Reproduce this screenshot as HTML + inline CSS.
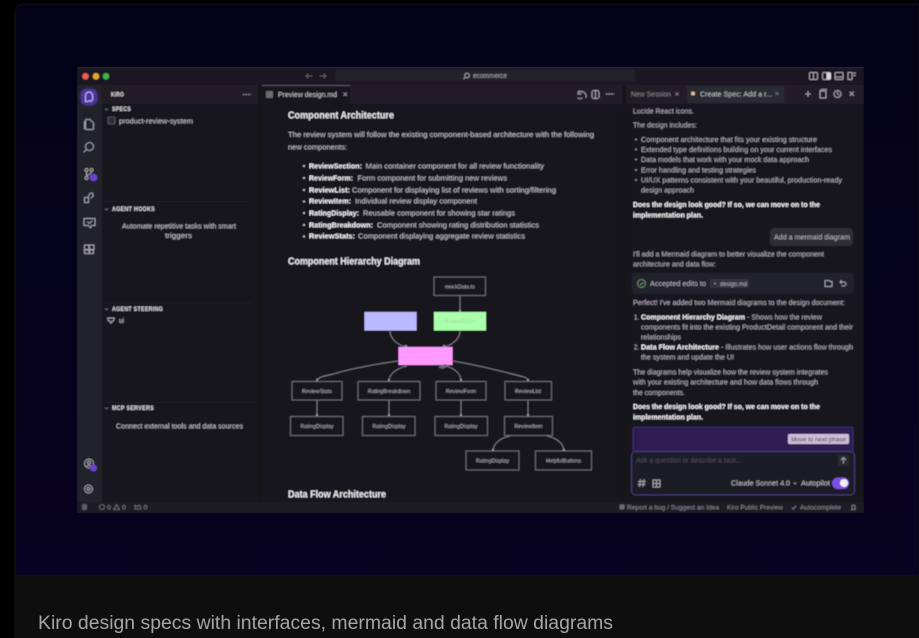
<!DOCTYPE html>
<html lang="en"><head><meta charset="utf-8"><title>Kiro design specs</title>
<style>
html,body{margin:0;padding:0;background:#000;width:919px;height:638px;overflow:hidden}
svg{display:block;font-family:"Liberation Sans",sans-serif}
text{white-space:pre}
.m{fill:#c6c4ca;font-size:7.5px}
.c{fill:#b6b4bb;font-size:7.2px}
.b{fill:#fbfafc;font-size:7.5px;font-weight:700}
.h{fill:#f0eff2;font-size:10px;font-weight:700}
.s{fill:#e0dfe4;font-size:6.2px;font-weight:700;letter-spacing:.3px}
.d{fill:#b5b4b9;font-size:5.4px;text-anchor:middle}
.st{fill:#8b8991;font-size:6.5px}
.i{fill:none;stroke:#a3a1a9;stroke-width:1;stroke-linecap:round;stroke-linejoin:round}
.ds{fill:#19181d;stroke:#7f7e83;stroke-width:.8}
.e{fill:none;stroke:#8f8e93;stroke-width:.8}
</style></head><body>
<svg width="919" height="638" viewBox="0 0 919 638" xmlns="http://www.w3.org/2000/svg">
<defs>
<linearGradient id="bg" x1="0" y1="0" x2="0" y2="1"><stop offset="0" stop-color="#040218"/><stop offset=".6" stop-color="#06021d"/><stop offset="1" stop-color="#0a0324"/></linearGradient>
<radialGradient id="glow"><stop offset=".55" stop-color="#5a3fc0" stop-opacity=".55"/><stop offset="1" stop-color="#5a3fc0" stop-opacity="0"/></radialGradient>
<filter id="bl" x="0" y="0" width="100%" height="100%"><feGaussianBlur stdDeviation=".42"/></filter>
</defs>
<rect width="919" height="638" fill="#000"/>
<path d="M15 638V13a9 9 0 0 1 9-9H919V638Z" fill="url(#bg)" stroke="#131318"/>
<rect x="15.500" y="575" width="904" height="63" fill="#0e0e0e"/>
<text x="38" y="629" textLength="575" lengthAdjust="spacingAndGlyphs" fill="#a6a6a6" font-size="19">Kiro design specs with interfaces, mermaid and data flow diagrams</text>

<g filter="url(#bl)">
<!-- window -->
<rect x="77" y="67" width="787" height="446" rx="3" fill="#131217"/>
<rect x="77" y="67" width="787" height="18" fill="#1a1920"/>
<rect x="77" y="67" width="787" height=".8" fill="#3a3940"/>
<circle cx="85.500" cy="76.300" r="3.300" fill="#e5604f"/><circle cx="96" cy="76.300" r="3.300" fill="#e0a92e"/><circle cx="106" cy="76.300" r="3.300" fill="#3fb24a"/>
<path class="i" d="M306 76h6M306 76l2-2M306 76l2 2M320 76h6M326 76l-2-2M326 76l-2 2" style="stroke:#5f5d66"/>
<rect x="335" y="70" width="300" height="11" rx="2" fill="#232129"/>
<circle class="i" cx="467" cy="75.500" r="2.300"/><path class="i" d="M465.400 77.200l-1.600 1.600"/>
<text x="473" y="78.200" textLength="34" lengthAdjust="spacingAndGlyphs" fill="#a9a7ae" font-size="7">ecommerce</text>
<g class="i">
<rect x="809.500" y="72.500" width="8" height="7" rx="1"/><path d="M813.500 72.500v7"/>
<rect x="822.500" y="72.500" width="8" height="7" rx="1.500"/>
<rect x="835" y="72.500" width="8" height="7" rx="1"/><path d="M835 77h8"/>
<rect x="848" y="72.500" width="4" height="7"/><path d="M853.500 73l2 0M853.500 75.500l2 0"/>
</g>
<path d="M826.500 72.500h3a1.500 1.500 0 0 1 1.500 1.500v4a1.500 1.500 0 0 1-1.500 1.500h-3Z" fill="#d8d6dc"/>

<!-- activity bar -->
<rect x="77" y="85" width="25" height="428" fill="#24222a"/>
<circle cx="89" cy="97" r="11" fill="url(#glow)"/>
<rect x="81" y="89" width="16" height="16" rx="5" fill="#4b369c"/>
<path d="M85.500 101.500v-6a3.500 3.500 0 0 1 7 0v4.500l-1.500 1.500-1.500-1-1.500 1-1 0Z" fill="none" stroke="#c9bdf2" stroke-width="1"/>
<g class="i">
<path d="M86 119.500h4l3.500 3.500v5.500a1 1 0 0 1-1 1H86.500a1 1 0 0 1-1-1v-8a1 1 0 0 1 .5-1Z"/><path d="M85.500 121.500h-1v7.500"/>
<circle cx="89.500" cy="146.500" r="4"/><path d="M86.500 149.500l-2.500 2.500"/>
<circle cx="86.500" cy="170" r="1.500"/><circle cx="86.500" cy="178" r="1.500"/><circle cx="91.500" cy="170" r="1.500"/><path d="M86.500 171.500v5M91.500 171.500c0 3-5 3-5 5"/>
<path d="M84.500 197.500h4v5h-4ZM88.500 197c0-3 2-4 4-4l1 2.500-2.500 2.500"/><path d="M85 202.500h3"/>
<path d="M84 218.500h11v7h-3.500l-1 2.500-2-2.500H84Z"/><path d="M87.500 222l2 1.500 2.500-2.500"/>
<path d="M84.500 245h4.500v4.500h-4.500ZM89.500 245h4.500v4.500h-4.500ZM84.500 250h4.500v3.500h-4.500ZM89.500 250h4v3.500h-4Z"/>
<circle cx="89" cy="463.500" r="4.500"/><circle cx="89" cy="462.500" r="1.500"/><path d="M86.500 466.500c1-1.500 4-1.500 5 0"/>
<circle cx="88.500" cy="489" r="1.500"/><circle cx="88.500" cy="489" r="4"/>
</g>
<circle cx="93.500" cy="177.500" r="3.800" fill="#6a43cf"/>
<circle cx="93.500" cy="468" r="3.500" fill="#6a43cf"/>

<!-- sidebar -->
<rect x="102" y="85" width="156" height="417" fill="#18171c"/>
<rect x="102" y="85" width="156" height="19" fill="#211f27"/>
<text class="s" x="111" y="96.500" textLength="13" lengthAdjust="spacingAndGlyphs">KIRO</text>
<path d="M243 94.500h8" stroke="#8f8d95" stroke-width="1.200" stroke-dasharray="1.500 1"/>
<g fill="none" stroke="#77757d" stroke-width=".8">
<path d="M105 108.500l1.500 1.500 1.500-1.500M105 208.500l1.500 1.500 1.500-1.500M105 308.500l1.500 1.500 1.500-1.500M105 407.500l1.500 1.500 1.500-1.500"/>
</g>
<path d="M104 201.500h148M104 303h148M104 402.500h152" stroke="#1f1e24" stroke-width="1"/>
<text class="s" x="112" y="111" textLength="19" lengthAdjust="spacingAndGlyphs">SPECS</text>
<rect x="108" y="117" width="7" height="7" rx="1" fill="#2f2e35" stroke="#74727a" stroke-width=".6"/>
<text class="m" x="119" y="123.500" textLength="74" lengthAdjust="spacingAndGlyphs">product-review-system</text>
<text class="s" x="112" y="211" textLength="43" lengthAdjust="spacingAndGlyphs">AGENT HOOKS</text>
<text class="m" x="122" y="228.500" textLength="114" lengthAdjust="spacingAndGlyphs">Automate repetitive tasks with smart</text>
<text class="m" x="165" y="238" textLength="27" lengthAdjust="spacingAndGlyphs">triggers</text>
<text class="s" x="112" y="311" textLength="51" lengthAdjust="spacingAndGlyphs">AGENT STEERING</text>
<path class="i" d="M107.500 318h7l-1 3h-1.500l-.5 2h-1l-.5-2h-1.500Z"/>
<text class="m" x="119" y="323" textLength="5" lengthAdjust="spacingAndGlyphs">ui</text>
<text class="s" x="112" y="410" textLength="42" lengthAdjust="spacingAndGlyphs">MCP SERVERS</text>
<text class="m" x="116" y="428.500" textLength="127" lengthAdjust="spacingAndGlyphs">Connect external tools and data sources</text>

<!-- editor -->
<rect x="262" y="85" width="360" height="417" fill="#18171c"/>
<rect x="262" y="85" width="360" height="19" fill="#201f26"/>
<rect x="262" y="85" width="88" height="19" fill="#18171c"/>
<rect x="262" y="85" width="88" height="1" fill="#55535e"/>
<rect x="266" y="91" width="7" height="7" rx="1" fill="#6b6972"/>
<text class="m" x="278" y="97" textLength="59" lengthAdjust="spacingAndGlyphs" style="fill:#c8c6cc">Preview design.md</text>
<path d="M343.500 92.500l3.500 3.500M347 92.500l-3.500 3.500" stroke="#a4a2a9" stroke-width=".8"/>
<g class="i">
<path d="M578 92.500a5 5 0 0 1 8 5M578 98a3 3 0 0 0 4 0"/><path d="M579 91l-1 3 3 0"/>
<rect x="592" y="90.500" width="7" height="8" rx="2"/><path d="M595.500 90.500v8"/>
</g>
<path d="M606 94h8" stroke="#a4a2a9" stroke-width="1.200" stroke-dasharray="1.500 1"/>

<text class="h" x="288" y="118.500" textLength="106" lengthAdjust="spacingAndGlyphs">Component Architecture</text>
<text class="m" x="288" y="137" textLength="306" lengthAdjust="spacingAndGlyphs">The review system will follow the existing component-based architecture with the following</text>
<text class="m" x="288" y="149.500" textLength="59" lengthAdjust="spacingAndGlyphs">new components:</text>
<g fill="#d0cfd4">
<circle cx="304" cy="166" r="1"/><circle cx="304" cy="178" r="1"/><circle cx="304" cy="190" r="1"/><circle cx="304" cy="201.500" r="1"/><circle cx="304" cy="213" r="1"/><circle cx="304" cy="225" r="1"/><circle cx="304" cy="236.500" r="1"/>
</g>
<text class="b" x="309" y="168.500" textLength="53" lengthAdjust="spacingAndGlyphs">ReviewSection:</text><text class="m" x="365.500" y="168.500" textLength="178.500" lengthAdjust="spacingAndGlyphs">Main container component for all review functionality</text>
<text class="b" x="309" y="180.500" textLength="44" lengthAdjust="spacingAndGlyphs">ReviewForm:</text><text class="m" x="357.500" y="180.500" textLength="149.500" lengthAdjust="spacingAndGlyphs">Form component for submitting new reviews</text>
<text class="b" x="309" y="192.500" textLength="41" lengthAdjust="spacingAndGlyphs">ReviewList:</text><text class="m" x="352" y="192.500" textLength="204" lengthAdjust="spacingAndGlyphs">Component for displaying list of reviews with sorting/filtering</text>
<text class="b" x="309" y="203.500" textLength="42" lengthAdjust="spacingAndGlyphs">ReviewItem:</text><text class="m" x="355" y="203.500" textLength="122" lengthAdjust="spacingAndGlyphs">Individual review display component</text>
<text class="b" x="309" y="215.500" textLength="50" lengthAdjust="spacingAndGlyphs">RatingDisplay:</text><text class="m" x="363" y="215.500" textLength="152" lengthAdjust="spacingAndGlyphs">Reusable component for showing star ratings</text>
<text class="b" x="309" y="227.500" textLength="64" lengthAdjust="spacingAndGlyphs">RatingBreakdown:</text><text class="m" x="377" y="227.500" textLength="162" lengthAdjust="spacingAndGlyphs">Component showing rating distribution statistics</text>
<text class="b" x="309" y="238.500" textLength="46" lengthAdjust="spacingAndGlyphs">ReviewStats:</text><text class="m" x="358" y="238.500" textLength="167" lengthAdjust="spacingAndGlyphs">Component displaying aggregate review statistics</text>
<text class="h" x="288" y="264.500" textLength="132" lengthAdjust="spacingAndGlyphs">Component Hierarchy Diagram</text>

<!-- diagram -->
<g class="e">
<path d="M460 296v16"/>
<path d="M390 331c0 8 8 14 16 16"/>
<path d="M460 331c0 8-8 14-16 16"/>
<path d="M398 361c-30 4-55 10-61 12-5 2-20 3-20 8"/>
<path d="M407 366c-10 2-18 8-18 15"/>
<path d="M445 366c10 2 16 8 16 15"/>
<path d="M453 361c30 5 55 12 71 16 3 1 4 2 4 4"/>
<path d="M317 400v16M389 400v16M461 400v16M528 400v16"/>
<path d="M510 436c-10 2-17 8-17 15"/>
<path d="M547 436c10 2 17 8 17 15"/>
</g>
<g fill="#aaa9ae">
<circle cx="460" cy="311" r="1"/><circle cx="406" cy="346" r="1"/><circle cx="444" cy="346" r="1"/><circle cx="317" cy="380" r="1"/><circle cx="389" cy="380" r="1"/><circle cx="461" cy="380" r="1"/><circle cx="528" cy="380" r="1"/><circle cx="317" cy="415" r="1"/><circle cx="389" cy="415" r="1"/><circle cx="461" cy="415" r="1"/><circle cx="528" cy="415" r="1"/><circle cx="493" cy="450" r="1"/><circle cx="564" cy="450" r="1"/>
</g>
<rect class="ds" x="434" y="277" width="51.500" height="18.500"/><text class="d" x="459.800" y="288.500">mockData.ts</text>
<rect x="364.500" y="312" width="52" height="18.500" fill="#b9b9ff"/>
<rect x="434" y="312" width="52" height="18.500" fill="#aaffaa"/>
<text class="d" x="460" y="323" style="fill:#9ae29a">ProductDetail</text>
<rect x="398.500" y="347" width="54" height="18" fill="#ff99ff"/>
<path d="M438 367l7-3 4 2-7 3Z" fill="#6c6b70"/>
<rect class="ds" x="292" y="381.500" width="50" height="18.500"/><text class="d" x="317" y="392.800">ReviewStats</text>
<rect class="ds" x="358" y="381.500" width="62" height="18.500"/><text class="d" x="389" y="392.800">RatingBreakdown</text>
<rect class="ds" x="436" y="381.500" width="50" height="18.500"/><text class="d" x="461" y="392.800">ReviewForm</text>
<rect class="ds" x="505" y="381.500" width="46.500" height="18.500"/><text class="d" x="528" y="392.800">ReviewList</text>
<rect class="ds" x="290.500" y="416.500" width="52.500" height="19"/><text class="d" x="317" y="428">RatingDisplay</text>
<rect class="ds" x="362.500" y="416.500" width="52.500" height="19"/><text class="d" x="389" y="428">RatingDisplay</text>
<rect class="ds" x="435" y="416.500" width="52.500" height="19"/><text class="d" x="461" y="428">RatingDisplay</text>
<rect class="ds" x="504.500" y="416.500" width="48" height="19"/><text class="d" x="528.500" y="428">ReviewItem</text>
<rect class="ds" x="466" y="451" width="53" height="19"/><text class="d" x="492.500" y="462.500">RatingDisplay</text>
<rect class="ds" x="535.500" y="451" width="56" height="19"/><text class="d" x="563.500" y="462.500">HelpfulButtons</text>
<text class="h" x="288" y="497.500" textLength="98" lengthAdjust="spacingAndGlyphs">Data Flow Architecture</text>

<!-- chat -->
<rect x="626" y="85" width="238" height="417" fill="#18171c"/>
<rect x="626" y="85" width="238" height="19" fill="#201f26"/>
<text class="c" x="631" y="96.500" textLength="40" lengthAdjust="spacingAndGlyphs" style="fill:#85838b">New Session</text>
<path d="M675.500 92.500l3 3M678.500 92.500l-3 3" stroke="#8a8890" stroke-width=".8"/>
<rect x="687" y="86" width="97" height="17" rx="1" fill="#2b2932"/>
<circle cx="693" cy="93.500" r="2" fill="#e2b9a0"/>
<text class="c" x="700" y="96.500" textLength="72" lengthAdjust="spacingAndGlyphs" style="fill:#c0bec5">Create Spec: Add a r...</text>
<path d="M775.500 92l3 3M778.500 92l-3 3" stroke="#77757d" stroke-width=".8"/>
<g class="i">
<path d="M808 91.500v5M805.500 94h5"/>
<path d="M820 91h6v7h-6ZM820 91l1.500-1.500h5"/>
<circle cx="837.500" cy="94" r="3.500"/><path d="M837.500 92v2l1.500 1"/>
<path d="M850 92l3.500 3.500M853.500 92l-3.500 3.500"/>
</g>

<text class="c" x="633" y="113.500" textLength="61" lengthAdjust="spacingAndGlyphs">Lucide React icons.</text>
<text class="c" x="633" y="127.500" textLength="64" lengthAdjust="spacingAndGlyphs">The design includes:</text>
<g fill="#aaa8af">
<circle cx="636" cy="139.500" r=".9"/><circle cx="636" cy="149.500" r=".9"/><circle cx="636" cy="159.500" r=".9"/><circle cx="636" cy="170" r=".9"/><circle cx="636" cy="180" r=".9"/>
</g>
<text class="c" x="641" y="142" textLength="176" lengthAdjust="spacingAndGlyphs">Component architecture that fits your existing structure</text>
<text class="c" x="641" y="152" textLength="191" lengthAdjust="spacingAndGlyphs">Extended type definitions building on your current interfaces</text>
<text class="c" x="641" y="162" textLength="168" lengthAdjust="spacingAndGlyphs">Data models that work with your mock data approach</text>
<text class="c" x="641" y="172.500" textLength="115" lengthAdjust="spacingAndGlyphs">Error handling and testing strategies</text>
<text class="c" x="641" y="182.500" textLength="201" lengthAdjust="spacingAndGlyphs">UI/UX patterns consistent with your beautiful, production-ready</text>
<text class="c" x="641" y="192.500" textLength="53" lengthAdjust="spacingAndGlyphs">design approach</text>
<text class="b" x="633" y="207" textLength="187" lengthAdjust="spacingAndGlyphs" style="font-size:7.2px">Does the design look good? If so, we can move on to the</text>
<text class="b" x="633" y="217.500" textLength="70" lengthAdjust="spacingAndGlyphs" style="font-size:7.2px">implementation plan.</text>
<rect x="770" y="228" width="83" height="18" rx="4" fill="#2f2d35"/>
<text class="c" x="774" y="239.500" textLength="76" lengthAdjust="spacingAndGlyphs">Add a mermaid diagram</text>
<text class="c" x="633" y="256.500" textLength="191" lengthAdjust="spacingAndGlyphs">I'll add a Mermaid diagram to better visualize the component</text>
<text class="c" x="633" y="266.500" textLength="83" lengthAdjust="spacingAndGlyphs">architecture and data flow:</text>
<rect x="632" y="273" width="222" height="21" rx="3" fill="#24222a"/>
<circle cx="641.500" cy="283.500" r="4" fill="none" stroke="#7a9c85" stroke-width=".8"/><path d="M639.800 283.500l1.300 1.300 2.300-2.500" fill="none" stroke="#7a9c85" stroke-width=".8"/>
<text class="c" x="650" y="286" textLength="56" lengthAdjust="spacingAndGlyphs">Accepted edits to</text>
<rect x="710" y="279" width="39" height="9" rx="2" fill="#35333b"/>
<circle cx="715" cy="283.500" r="1" fill="#888"/>
<text class="c" x="720" y="285.800" textLength="27" lengthAdjust="spacingAndGlyphs" style="font-size:6px">design.md</text>
<g class="i"><path d="M825 280.500h4l1 1h2v5h-7Z"/><path d="M840 282h4a2 2 0 0 1 0 4h-2M840 282l1.500-1.500M840 282l1.500 1.500"/></g>
<text class="c" x="633" y="305" textLength="212" lengthAdjust="spacingAndGlyphs">Perfect! I've added two Mermaid diagrams to the design document:</text>
<text class="c" x="634" y="319.500" textLength="5" lengthAdjust="spacingAndGlyphs">1.</text>
<text class="b" x="641" y="319.500" textLength="104" lengthAdjust="spacingAndGlyphs" style="font-size:7.200px">Component Hierarchy Diagram</text>
<text class="c" x="747" y="319.500" textLength="75" lengthAdjust="spacingAndGlyphs">- Shows how the review</text>
<text class="c" x="641" y="329.500" textLength="212" lengthAdjust="spacingAndGlyphs">components fit into the existing ProductDetail component and their</text>
<text class="c" x="641" y="339.500" textLength="40" lengthAdjust="spacingAndGlyphs">relationships</text>
<text class="c" x="634" y="349.500" textLength="5" lengthAdjust="spacingAndGlyphs">2.</text>
<text class="b" x="641" y="349.500" textLength="78" lengthAdjust="spacingAndGlyphs" style="font-size:7.200px">Data Flow Architecture</text>
<text class="c" x="721" y="349.500" textLength="132" lengthAdjust="spacingAndGlyphs">- Illustrates how user actions flow through</text>
<text class="c" x="641" y="359.500" textLength="93" lengthAdjust="spacingAndGlyphs">the system and update the UI</text>
<text class="c" x="633" y="374.500" textLength="195" lengthAdjust="spacingAndGlyphs">The diagrams help visualize how the review system integrates</text>
<text class="c" x="633" y="384.500" textLength="185" lengthAdjust="spacingAndGlyphs">with your existing architecture and how data flows through</text>
<text class="c" x="633" y="395" textLength="52" lengthAdjust="spacingAndGlyphs">the components.</text>
<text class="b" x="633" y="409" textLength="187" lengthAdjust="spacingAndGlyphs" style="font-size:7.2px">Does the design look good? If so, we can move on to the</text>
<text class="b" x="633" y="419.500" textLength="70" lengthAdjust="spacingAndGlyphs" style="font-size:7.2px">implementation plan.</text>
<rect x="633" y="427" width="220" height="26" rx="2" fill="#2f1f52" stroke="#46357a" stroke-width=".8"/>
<rect x="788" y="434" width="61" height="10" rx="1.500" fill="#c9bfd4"/>
<text x="791" y="441.300" textLength="55" lengthAdjust="spacingAndGlyphs" fill="#3b3152" font-size="6.5">Move to next phase</text>
<rect x="631.500" y="451.500" width="223" height="43.500" rx="4" fill="#1d1b25" stroke="#4b3a7e"/>
<text class="c" x="636" y="462.500" textLength="106" lengthAdjust="spacingAndGlyphs" style="fill:#4f4d58">Ask a question or describe a task...</text>
<rect x="838" y="455" width="11" height="11" rx="2" fill="#2b2932"/>
<path d="M843.500 463.500v-6M841 460l2.500-2.500 2.500 2.500" fill="none" stroke="#aaa8af" stroke-width=".9"/>
<path class="i" d="M640.500 479.500l-1 7M644 479.500l-1 7M638.500 481.500h7M638 484.500h7"/>
<path class="i" d="M653 480h7v7h-7ZM656.500 480v7M653 483.500h7"/>
<text class="c" x="731" y="485.500" textLength="59" lengthAdjust="spacingAndGlyphs" style="fill:#c0bec5">Claude Sonnet 4.0</text>
<path d="M793.500 482.500l1.500 1.500 1.500-1.500" fill="none" stroke="#9a98a0" stroke-width=".8"/>
<text class="c" x="801" y="485.500" textLength="29" lengthAdjust="spacingAndGlyphs" style="fill:#c0bec5">Autopilot</text>
<rect x="832" y="477.500" width="17" height="11.500" rx="5.700" fill="#7c4fe0"/>
<circle cx="844" cy="483" r="4" fill="#f1effa"/>

<!-- fade at bottom of editor -->
<rect x="262" y="498" width="360" height="4" fill="#15141a" opacity=".6"/>

<!-- status bar -->
<rect x="77" y="502" width="787" height="11" rx="1" fill="#1f1e24"/>
<rect x="82" y="504" width="5" height="6" rx="1" fill="#5d5b63"/>
<circle class="i" cx="102" cy="507" r="2.500" style="stroke:#77757d;stroke-width:.8"/>
<text class="st" x="107" y="509.500" textLength="4" lengthAdjust="spacingAndGlyphs">0</text>
<path class="i" d="M116.500 504.500l3 5h-6Z" style="stroke:#77757d;stroke-width:.8"/>
<text class="st" x="122" y="509.500" textLength="4" lengthAdjust="spacingAndGlyphs">0</text>
<path class="i" d="M135 505l2 2 2-2 2 2v2h-6Z" style="stroke:#77757d;stroke-width:.8"/>
<text class="st" x="143.500" y="509.500" textLength="4" lengthAdjust="spacingAndGlyphs">0</text>
<rect x="619.500" y="504.500" width="5" height="5" rx="1" fill="#6c6a72"/>
<text class="st" x="627" y="509.500" textLength="92" lengthAdjust="spacingAndGlyphs">Report a bug / Suggest an Idea</text>
<text class="st" x="727" y="509.500" textLength="56" lengthAdjust="spacingAndGlyphs">Kiro Public Preview</text>
<path d="M792 507.500l1.500 1.500 2.500-3" fill="none" stroke="#8b8991" stroke-width=".8"/>
<text class="st" x="800" y="509.500" textLength="41" lengthAdjust="spacingAndGlyphs">Autocomplete</text>
<path d="M851 509.500h5M852 509.500v-3a1.500 1.500 0 0 1 3 0v3" fill="none" stroke="#8b8991" stroke-width=".8"/>
</g>
</svg>
</body></html>
